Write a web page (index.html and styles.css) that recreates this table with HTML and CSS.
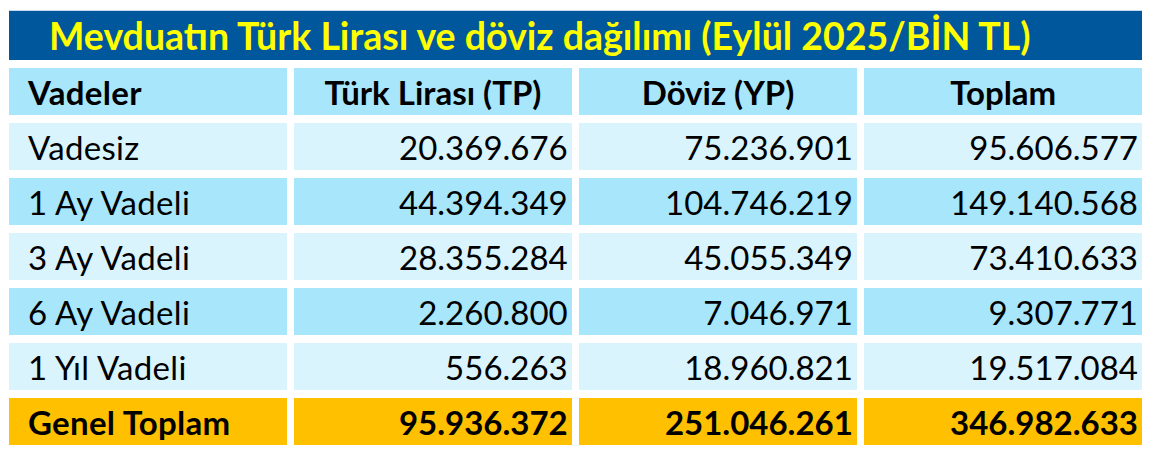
FILE: index.html
```html
<!DOCTYPE html>
<html lang="tr">
<head>
    <meta charset="UTF-8">
    <title>Mevduat dağılımı</title>
    <link rel="stylesheet" href="styles.css">
</head>
<body>
    <div class="wrap">
        <div class="title">Mevduatın Türk Lirası ve döviz dağılımı (Eylül 2025/BİN TL)</div>

        <div class="grid">
            <div class="cell head left">Vadeler</div>
            <div class="cell head">Türk Lirası (TP)</div>
            <div class="cell head">Döviz (YP)</div>
            <div class="cell head">Toplam</div>

            <div class="cell light left">Vadesiz</div>
            <div class="cell light num">20.369.676</div>
            <div class="cell light num">75.236.901</div>
            <div class="cell light num">95.606.577</div>

            <div class="cell dark left">1 Ay Vadeli</div>
            <div class="cell dark num">44.394.349</div>
            <div class="cell dark num">104.746.219</div>
            <div class="cell dark num">149.140.568</div>

            <div class="cell light left">3 Ay Vadeli</div>
            <div class="cell light num">28.355.284</div>
            <div class="cell light num">45.055.349</div>
            <div class="cell light num">73.410.633</div>

            <div class="cell dark left">6 Ay Vadeli</div>
            <div class="cell dark num">2.260.800</div>
            <div class="cell dark num">7.046.971</div>
            <div class="cell dark num">9.307.771</div>

            <div class="cell light left">1 Yıl Vadeli</div>
            <div class="cell light num">556.263</div>
            <div class="cell light num">18.960.821</div>
            <div class="cell light num">19.517.084</div>

            <div class="cell total left">Genel Toplam</div>
            <div class="cell total num">95.936.372</div>
            <div class="cell total num">251.046.261</div>
            <div class="cell total num">346.982.633</div>
        </div>
    </div>
</body>
</html>
```

FILE: styles.css
```css
body {
    margin: 0;
    padding: 0;
    background-color: #ffffff;
    font-family: Lato, "Open Sans", sans-serif;
    color: #000000;
}

.wrap {
    width: 1133px;
    padding: 10px 0 0 9px;
}

.title {
    border-top: 1px solid #c6d9ec;
    height: 49px;
    line-height: 49px;
    background-color: #00579b;
    color: #ffff00;
    font-weight: bold;
    font-size: 37.5px;
    padding-left: 40px;
    margin-bottom: 8px;
    white-space: nowrap;
}

.grid {
    display: grid;
    grid-template-columns: repeat(4, 1fr);
    grid-auto-rows: 47px;
    gap: 8px 7.5px;
}

.cell {
    display: flex;
    align-items: center;
    justify-content: center;
    font-size: 33px;
    padding: 0 4px;
}

.left {
    justify-content: flex-start;
    padding-left: 19px;
    letter-spacing: 0.3px;
}

.num {
    justify-content: flex-end;
}

.head {
    background-color: #a8e6fc;
    font-weight: bold;
}

.light {
    background-color: #d9f4fd;
}

.dark {
    background-color: #a8e6fc;
}

.total {
    background-color: #ffc000;
    font-weight: bold;
}
```
